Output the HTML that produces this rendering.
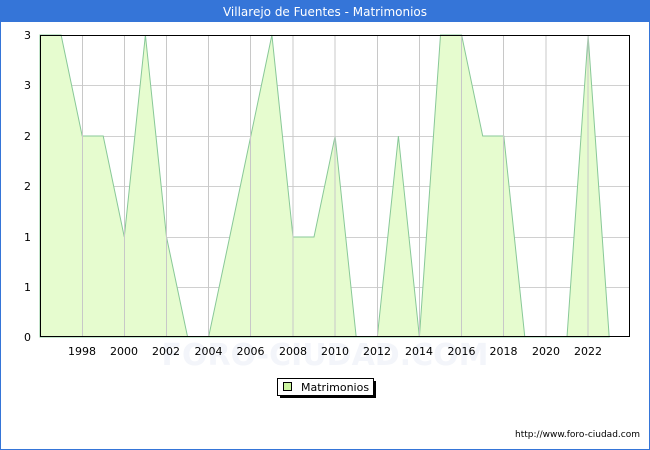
<!DOCTYPE html>
<html><head><meta charset="utf-8"><style>
body{margin:0;background:#fff;}
svg{display:block;font-family:"DejaVu Sans","Liberation Sans",sans-serif;}
</style></head><body>
<svg width="650" height="450" viewBox="0 0 650 450" xmlns="http://www.w3.org/2000/svg">
<rect x="0.5" y="0.5" width="649" height="449" fill="#fff" stroke="#3575d8"/>
<rect x="0" y="0" width="650" height="22" fill="#3575d8"/>
<text x="325" y="16" fill="#fff" font-size="12" text-anchor="middle">Villarejo de Fuentes - Matrimonios</text>
<text x="325" y="365" fill="#f3f5fa" font-size="30" text-anchor="middle" font-weight="bold">FORO-CIUDAD.COM</text>
<g stroke="#d0d0d0" stroke-width="1">
<line x1="40" y1="85.5" x2="630" y2="85.5"/><line x1="40" y1="136.5" x2="630" y2="136.5"/><line x1="40" y1="186.5" x2="630" y2="186.5"/><line x1="40" y1="237.5" x2="630" y2="237.5"/><line x1="40" y1="287.5" x2="630" y2="287.5"/>
</g>
<polygon fill="#e6fccf" stroke="#88c898" stroke-width="1" points="40,337 40,35 61.1,35 82.2,136 103.2,136 124.3,237 145.4,35 166.5,237 187.6,337 208.6,337 229.7,237 250.8,136 271.9,35 293,237 314,237 335.1,136 356.2,337 377.3,337 398.4,136 419.4,337 440.5,35 461.6,35 482.7,136 503.8,136 524.8,337 545.9,337 567,337 588.1,35 609.2,337"/>
<g stroke="#c8c8c8" stroke-width="1">
<line x1="82.5" y1="35" x2="82.5" y2="337"/><line x1="124.5" y1="35" x2="124.5" y2="337"/><line x1="166.5" y1="35" x2="166.5" y2="337"/><line x1="208.5" y1="35" x2="208.5" y2="337"/><line x1="250.5" y1="35" x2="250.5" y2="337"/><line x1="293" y1="35" x2="293" y2="337"/><line x1="335" y1="35" x2="335" y2="337"/><line x1="377.5" y1="35" x2="377.5" y2="337"/><line x1="419.5" y1="35" x2="419.5" y2="337"/><line x1="461.5" y1="35" x2="461.5" y2="337"/><line x1="503.5" y1="35" x2="503.5" y2="337"/><line x1="546" y1="35" x2="546" y2="337"/><line x1="588" y1="35" x2="588" y2="337"/>
</g>
<rect x="40.5" y="35.5" width="589" height="301" fill="none" stroke="#000"/>
<g font-size="11" fill="#000" text-anchor="end">
<text x="31" y="39">3</text><text x="31" y="89">3</text><text x="31" y="140">2</text><text x="31" y="190">2</text><text x="31" y="241">1</text><text x="31" y="291">1</text><text x="31" y="341">0</text>
</g>
<g font-size="11" fill="#000" text-anchor="middle">
<text x="82" y="355">1998</text><text x="124" y="355">2000</text><text x="166" y="355">2002</text><text x="208.5" y="355">2004</text><text x="250.5" y="355">2006</text><text x="293" y="355">2008</text><text x="335" y="355">2010</text><text x="377" y="355">2012</text><text x="419" y="355">2014</text><text x="461.5" y="355">2016</text><text x="503.5" y="355">2018</text><text x="546" y="355">2020</text><text x="588" y="355">2022</text>
</g>
<rect x="280" y="381" width="96" height="17" fill="#000"/>
<rect x="277.5" y="378.5" width="96" height="17" fill="#fff" stroke="#000"/>
<rect x="283.5" y="382.5" width="8" height="8" fill="#ccf5a0" stroke="#000"/>
<text x="301" y="391" font-size="11" fill="#000">Matrimonios</text>
<text x="640" y="437" font-size="9" fill="#000" text-anchor="end">http://www.foro-ciudad.com</text>
</svg>
</body></html>
